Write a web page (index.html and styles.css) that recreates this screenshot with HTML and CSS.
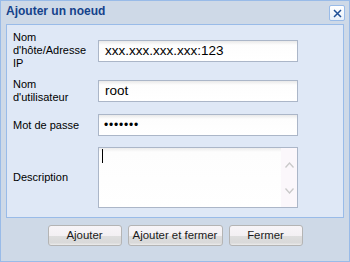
FILE: index.html
```html
<!DOCTYPE html>
<html lang="fr">
<head>
<meta charset="utf-8">
<title>Ajouter un noeud</title>
<link rel="stylesheet" href="styles.css">
</head>
<body>
<div class="window">
  <div class="titlebar">
    <span class="title">Ajouter un noeud</span>
    <span class="close">
      <svg width="13" height="13" viewBox="0 0 13 13"><path d="M3 3 L10 10 M10 3 L3 10" stroke="#1f4f96" stroke-width="1.5" fill="none"/></svg>
    </span>
  </div>
  <div class="panel">
    <div class="row row-host">
      <label class="lbl">Nom<br>d'hôte/Adresse<br>IP</label>
      <div class="field">xxx.xxx.xxx.xxx:123</div>
    </div>
    <div class="row row-user">
      <label class="lbl">Nom<br>d'utilisateur</label>
      <div class="field">root</div>
    </div>
    <div class="row row-pass">
      <label class="lbl">Mot de passe</label>
      <div class="field pass">•••••••</div>
    </div>
    <div class="row row-desc">
      <label class="lbl">Description</label>
      <div class="textarea">
        <div class="ta-text"><span class="caret"></span></div>
        <div class="scroll">
          <svg width="9" height="6" viewBox="0 0 9 6"><path d="M0.5 5.5 L4.5 1 L8.5 5.5" stroke="#c9c9c9" stroke-width="1.3" fill="none"/></svg>
          <svg width="9" height="6" viewBox="0 0 9 6"><path d="M0.5 0.5 L4.5 5 L8.5 0.5" stroke="#c9c9c9" stroke-width="1.3" fill="none"/></svg>
        </div>
      </div>
    </div>
  </div>
  <div class="buttons">
    <button class="btn">Ajouter</button>
    <button class="btn wide">Ajouter et fermer</button>
    <button class="btn">Fermer</button>
  </div>
</div>
</body>
</html>
```

FILE: styles.css
```css
html, body {
  margin: 0;
  padding: 0;
  background: #ffffff;
}

.window {
  box-sizing: border-box;
  width: 350px;
  height: 262px;
  border: 1px solid #99bbe8;
  background: #ceD9e7;
  padding: 0 5px;
  display: flex;
  flex-direction: column;
  font-family: "Liberation Sans", Arial, sans-serif;
}

.titlebar {
  height: 23px;
  display: flex;
  align-items: flex-start;
  justify-content: space-between;
}

.title {
  margin-top: 3px;
  font-size: 12px;
  line-height: 15px;
  font-weight: bold;
  color: #15428b;
}

.close {
  box-sizing: border-box;
  margin-top: 4px;
  margin-right: -1px;
  width: 16px;
  height: 16px;
  border: 1px solid #99bbe8;
  border-radius: 2px;
  background: linear-gradient(#ffffff, #e8f0fa);
  display: flex;
  align-items: center;
  justify-content: center;
}

.panel {
  box-sizing: border-box;
  height: 194px;
  border: 1px solid #99bbe8;
  background: #dfe8f6;
  padding: 6px 6px 0 6px;
  display: flex;
  flex-direction: column;
}

.row {
  display: grid;
  grid-template-columns: 85px 200px;
  align-items: center;
}

.row-user { margin-top: 8px; }
.row-pass { margin-top: 10px; }
.row-desc { margin-top: 11px; }

.lbl {
  font-size: 11px;
  line-height: 13px;
  color: #000000;
}

.field {
  box-sizing: border-box;
  height: 22px;
  border: 1px solid #abb6c8;
  background: linear-gradient(#e9e9e9, #fdfdfd 4px, #ffffff);
  padding: 0 6px;
  font-size: 13.5px;
  line-height: 20px;
  color: #000000;
}

.field.pass {
  font-size: 12px;
  letter-spacing: 0.8px;
  padding-left: 5px;
}

.textarea {
  box-sizing: border-box;
  height: 61px;
  border: 1px solid #abb6c8;
  background: linear-gradient(#ececec, #fdfdfd 4px, #ffffff);
  display: flex;
}

.ta-text {
  flex: 1;
  padding: 1px 0 0 3px;
}

.caret {
  display: block;
  width: 1px;
  height: 14px;
  background: #000000;
}

.scroll {
  width: 16px;
  background: #fbf7fb;
  display: flex;
  flex-direction: column;
  align-items: center;
  justify-content: center;
  gap: 20px;
}

.scroll svg { display: block; }

.buttons {
  display: flex;
  justify-content: center;
  gap: 6px;
  margin-top: 7px;
}

.btn {
  box-sizing: border-box;
  width: 74px;
  height: 21px;
  border: 1px solid #b4b4b4;
  border-radius: 3px;
  background: linear-gradient(#f8f5f8 0, #f3f0f3 50%, #dedede 52%, #d9d9d9 88%, #ececec 100%);
  font-family: "Liberation Sans", Arial, sans-serif;
  font-size: 11.4px;
  line-height: 17px;
  color: #1a1a1a;
  padding: 0;
}

.btn.wide { width: 95px; }
```
